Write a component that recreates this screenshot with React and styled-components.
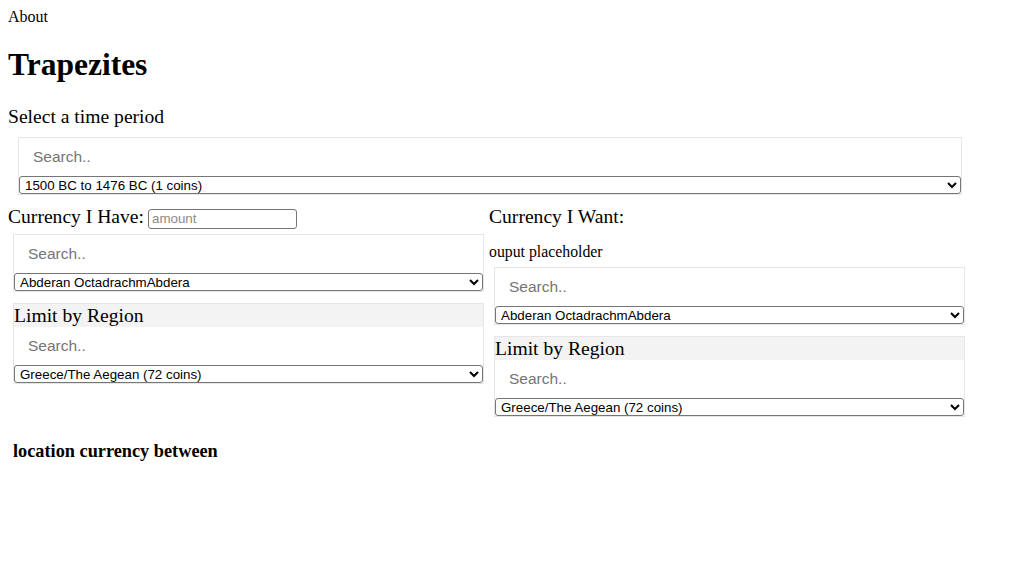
import styled, { createGlobalStyle } from "styled-components";

const GlobalStyle = createGlobalStyle`
  body {
    margin: 8px;
    background: #fff;
    color: #000;
    font-family: "Liberation Serif", "Times New Roman", serif;
  }
`;

const Nav = styled.div`
  font-size: 16px;
  line-height: 18px;
`;

const Title = styled.h1`
  font-size: 31.5px;
  line-height: 37px;
  margin: 20px 0 22px;
`;

const Label = styled.div`
  font-size: 19.6px;
  line-height: ${(p) => (p.$tight ? "21px" : "23px")};
`;

const Output = styled.div`
  font-size: 15.8px;
  line-height: 18px;
  margin: 16px 0 0;
`;

const Picker = styled.div`
  border: 1px solid #e6e6e6;
  background: #fff;
  width: ${(p) => (p.$wide ? "942px" : "auto")};
  margin: ${(p) => (p.$wide ? "9px 10px 11px" : "5.5px 5px")};
`;

const RegionTitle = styled.div`
  background: #f3f3f3;
  font-size: 19.6px;
  line-height: 23px;
`;

const Search = styled.input`
  display: block;
  width: 100%;
  height: 38px;
  box-sizing: border-box;
  margin: 0;
  padding: 0 14px;
  border: none;
  outline: none;
  background: transparent;
  font-family: "Liberation Sans", Arial, sans-serif;
  font-size: 15.5px;
  &::placeholder {
    color: #757575;
  }
`;

const Select = styled.select`
  display: block;
  width: 100%;
  height: 18px;
  box-sizing: border-box;
  margin: 0;
  padding: 0 0 0 1px;
  border: 1px solid #767676;
  border-radius: 3px;
  background: #fff;
  color: #000;
  font-family: "Liberation Sans", Arial, sans-serif;
  font-size: 13.33px;
`;

const Amount = styled.input`
  width: 149px;
  height: 20px;
  box-sizing: border-box;
  margin: 0 0 0 4px;
  padding: 1px 3px;
  border: 1px solid #767676;
  border-radius: 3px;
  font-family: "Liberation Sans", Arial, sans-serif;
  font-size: 13.33px;
  &::placeholder {
    color: #8b8b8b;
  }
`;

const Columns = styled.div`
  display: flex;
`;

const Column = styled.div`
  width: 481px;
  display: flex;
  flex-direction: column;
`;

const Footer = styled.h3`
  font-size: 18.3px;
  line-height: 21px;
  margin: 19px 0 0 5px;
`;

function SearchSelect({ wide, region, value }) {
  return (
    <Picker $wide={wide}>
      {region && <RegionTitle>Limit by Region</RegionTitle>}
      <Search type="text" placeholder="Search.." />
      <Select defaultValue={value}>
        <option>{value}</option>
      </Select>
    </Picker>
  );
}

export default function App() {
  return (
    <div>
      <GlobalStyle />
      <Nav>About</Nav>
      <Title>Trapezites</Title>
      <Label>Select a time period</Label>
      <SearchSelect wide value="1500 BC to 1476 BC (1 coins)" />
      <Columns>
        <Column>
          <Label $tight>
            Currency I Have:
            <Amount type="text" placeholder="amount" />
          </Label>
          <SearchSelect value="Abderan OctadrachmAbdera" />
          <SearchSelect region value="Greece/The Aegean (72 coins)" />
        </Column>
        <Column>
          <Label $tight>Currency I Want:</Label>
          <Output>ouput placeholder</Output>
          <SearchSelect value="Abderan OctadrachmAbdera" />
          <SearchSelect region value="Greece/The Aegean (72 coins)" />
        </Column>
      </Columns>
      <Footer>location currency between</Footer>
    </div>
  );
}
